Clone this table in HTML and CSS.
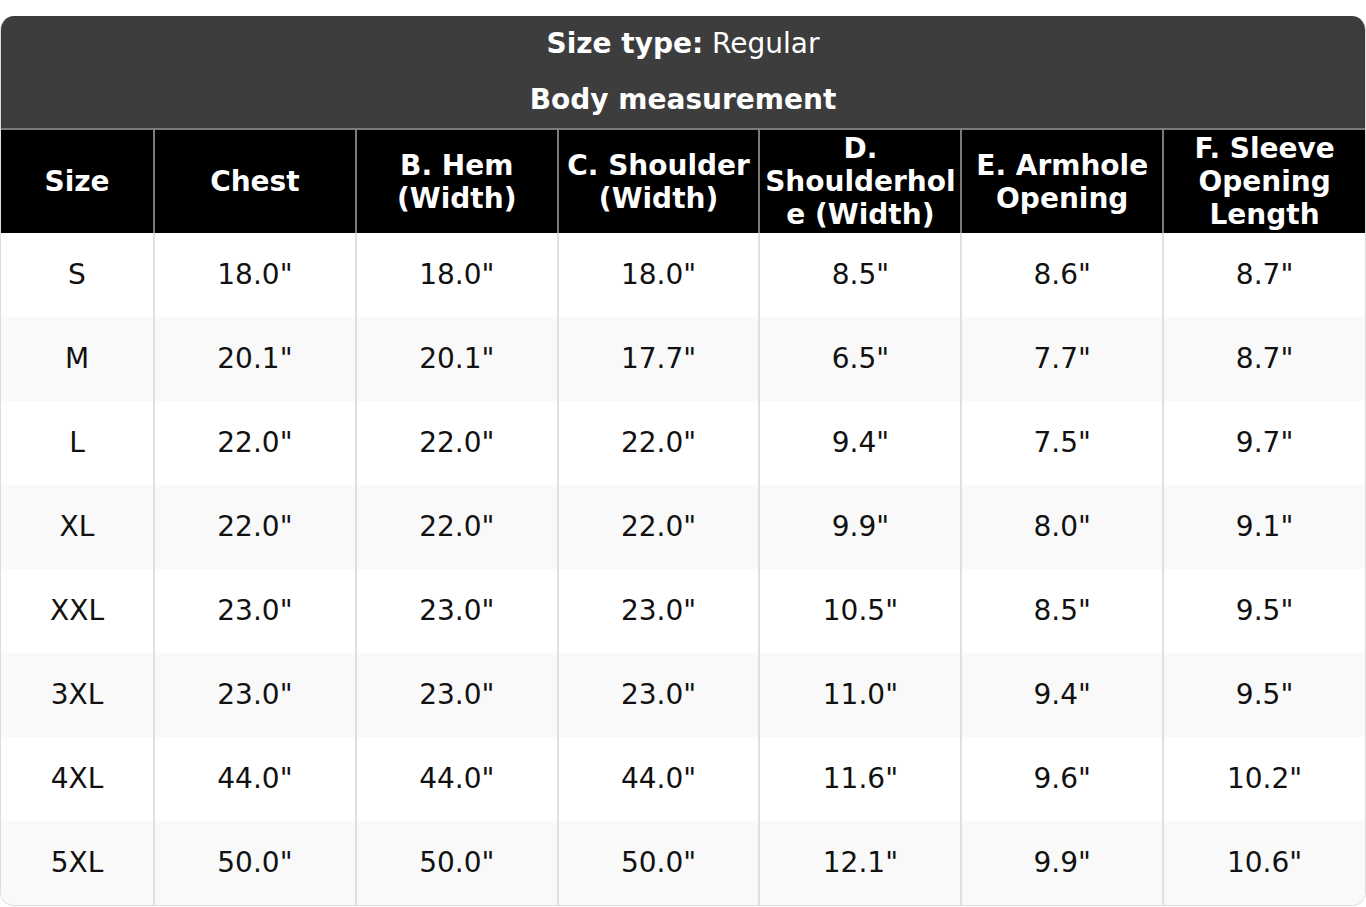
FILE: index.html
```html
<!DOCTYPE html>
<html>
<head>
<meta charset="utf-8">
<link rel="stylesheet" href="styles.css">
</head>
<body>
<div class="chart">
  <div class="title-block">
    <div class="title-line"><b>Size type:</b> Regular</div>
    <div class="title-line"><b>Body measurement</b></div>
  </div>
  <table class="size-table">
    <colgroup>
      <col class="c-size">
      <col><col><col><col><col><col>
    </colgroup>
    <thead>
      <tr>
        <th>Size</th>
        <th>Chest</th>
        <th>B. Hem (Width)</th>
        <th>C. Shoulder (Width)</th>
        <th>D. Shoulderhole (Width)</th>
        <th>E. Armhole Opening</th>
        <th>F. Sleeve Opening Length</th>
      </tr>
    </thead>
    <tbody>
      <tr><td>S</td><td>18.0"</td><td>18.0"</td><td>18.0"</td><td>8.5"</td><td>8.6"</td><td>8.7"</td></tr>
      <tr><td>M</td><td>20.1"</td><td>20.1"</td><td>17.7"</td><td>6.5"</td><td>7.7"</td><td>8.7"</td></tr>
      <tr><td>L</td><td>22.0"</td><td>22.0"</td><td>22.0"</td><td>9.4"</td><td>7.5"</td><td>9.7"</td></tr>
      <tr><td>XL</td><td>22.0"</td><td>22.0"</td><td>22.0"</td><td>9.9"</td><td>8.0"</td><td>9.1"</td></tr>
      <tr><td>XXL</td><td>23.0"</td><td>23.0"</td><td>23.0"</td><td>10.5"</td><td>8.5"</td><td>9.5"</td></tr>
      <tr><td>3XL</td><td>23.0"</td><td>23.0"</td><td>23.0"</td><td>11.0"</td><td>9.4"</td><td>9.5"</td></tr>
      <tr><td>4XL</td><td>44.0"</td><td>44.0"</td><td>44.0"</td><td>11.6"</td><td>9.6"</td><td>10.2"</td></tr>
      <tr><td>5XL</td><td>50.0"</td><td>50.0"</td><td>50.0"</td><td>12.1"</td><td>9.9"</td><td>10.6"</td></tr>
    </tbody>
  </table>
</div>
</body>
</html>
```
FILE: styles.css
```css
html, body {
  margin: 0;
  padding: 0;
  background: #ffffff;
}
body {
  padding-top: 16px;
  font-family: "DejaVu Sans", "Liberation Sans", sans-serif;
  font-size: 28px;
  color: #111111;
}
.chart {
  width: 1366px;
  box-sizing: border-box;
  border: 1px solid #dcdcdc;
  border-top: none;
  border-radius: 14px;
  overflow: hidden;
}
.title-block {
  background: #3d3d3d;
  color: #ffffff;
  text-align: center;
}
.title-line {
  height: 56px;
  line-height: 56px;
}
.title-line b {
  font-weight: bold;
}
.size-table {
  width: 100%;
  border-collapse: collapse;
  table-layout: fixed;
}
.c-size {
  width: 153px;
}
.size-table th {
  background: #000000;
  color: #ffffff;
  font-weight: bold;
  height: 104px;
  box-sizing: border-box;
  padding: 2px 4px;
  line-height: 33px;
  text-align: center;
  vertical-align: middle;
  overflow-wrap: break-word;
  word-break: break-word;
  border-top: 2px solid #7a7a7a;
  border-left: 2px solid #7a7a7a;
}
.size-table th:first-child {
  border-left: none;
}
.size-table td {
  height: 84px;
  box-sizing: border-box;
  padding: 0 4px;
  text-align: center;
  vertical-align: middle;
  line-height: 32px;
  border-left: 2px solid #e0e0e0;
}
.size-table td:first-child {
  border-left: none;
}
.size-table tbody tr:nth-child(even) td {
  background: #f9f9f9;
}
.size-table tbody tr:nth-child(odd) td {
  background: #ffffff;
}
```
